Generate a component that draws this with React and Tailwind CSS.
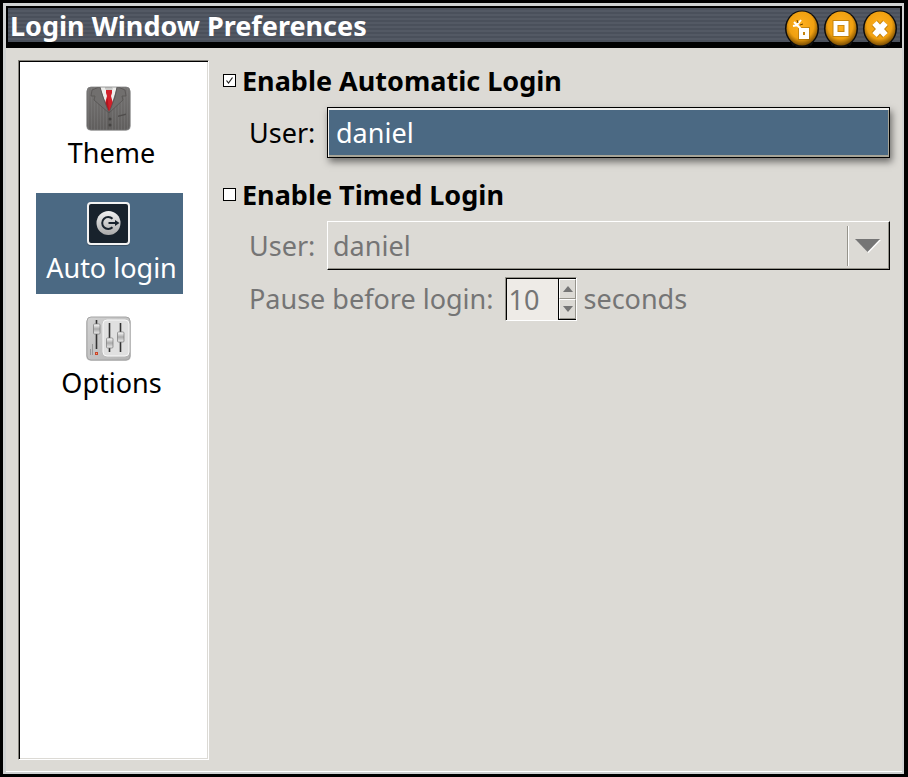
import { useState } from "react";

function ThemeIcon() {
  return (
    <svg width="48" height="48" viewBox="1 -1 48 48" aria-hidden="true">
      <defs>
        <linearGradient id="suit" x1="0" y1="0" x2="0" y2="1">
          <stop offset="0" stopColor="#777574" />
          <stop offset="1" stopColor="#605e5d" />
        </linearGradient>
        <pattern id="pin" width="3" height="4" patternUnits="userSpaceOnUse">
          <rect width="1" height="4" fill="#8a8887" opacity="0.3" />
        </pattern>
        <clipPath id="suitClip">
          <rect x="2" y="2" width="43" height="43" rx="4" />
        </clipPath>
      </defs>
      <rect x="1" y="3" width="45" height="43" rx="5" fill="#000" opacity="0.2" />
      <g clipPath="url(#suitClip)">
        <rect x="2" y="2" width="43" height="43" fill="url(#suit)" />
        <rect x="2" y="2" width="43" height="43" fill="url(#pin)" />
        <path d="M15 2H32L24 28Z" fill="#eeeeec" />
        <path d="M20 2h7l1 2-4 3-4-3z" fill="#c9c9c7" />
        <path d="M21 5h6l0 3-1 3 2.500 9-4.500 7-4.500-7 2.500-9-1-3z" fill="#d2202a" />
        <path d="M22.500 12l-2 8 3.500 6z" fill="#b3151f" />
        <path d="M14 2L7 5l-1 6 4 0-1 4 15 13-6-16-3-10zM33 2l7 3 1 6-4 0 1 4-14 13 6-16 2-10z" fill="#716f6e" stroke="#555352" strokeWidth="0.800" />
        <path d="M24 28V45" stroke="#555352" strokeWidth="0.800" />
        <circle cx="25" cy="34" r="1.500" fill="#454342" />
        <circle cx="25" cy="40" r="1.500" fill="#454342" />
        <path d="M33 30.500l8-2v1.500l-8 2z" fill="#504e4d" />
      </g>
      <rect x="2" y="2" width="43" height="43" rx="4" fill="none" stroke="#777" opacity="0.7" />
    </svg>
  );
}

function AutoLoginIcon() {
  return (
    <svg width="48" height="48" viewBox="1 -1 48 48" aria-hidden="true">
      <defs>
        <linearGradient id="disc" x1="0" y1="0" x2="0" y2="1">
          <stop offset="0" stopColor="#f1f1f1" />
          <stop offset="1" stopColor="#aaa" />
        </linearGradient>
      </defs>
      <rect x="2" y="3" width="43" height="43" rx="4" fill="#000" opacity="0.25" />
      <rect x="3" y="3" width="41" height="41" rx="3" fill="#18222c" stroke="#f2f2f2" strokeWidth="2" />
      <circle cx="23.500" cy="23" r="12" fill="url(#disc)" />
      <path d="M27.500 18.800A6 6 0 1 0 27.500 27.200" fill="none" stroke="#18222c" strokeWidth="2" />
      <path d="M23.500 23H31" stroke="#18222c" strokeWidth="2" />
      <path d="M30 20l4.500 3-4.500 3z" fill="#18222c" />
    </svg>
  );
}

function OptionsIcon() {
  return (
    <svg width="48" height="48" viewBox="1 -1 48 48" aria-hidden="true">
      <defs>
        <linearGradient id="metal" x1="0" y1="0" x2="1" y2="1">
          <stop offset="0" stopColor="#d2d2d2" />
          <stop offset="1" stopColor="#b4b4b4" />
        </linearGradient>
        <linearGradient id="knob" x1="0" y1="0" x2="0" y2="1">
          <stop offset="0" stopColor="#fff" />
          <stop offset="0.5" stopColor="#aaa" />
          <stop offset="1" stopColor="#eee" />
        </linearGradient>
      </defs>
      <rect x="1" y="3" width="45" height="43" rx="5" fill="#000" opacity="0.2" />
      <rect x="2" y="2" width="43" height="43" rx="4" fill="url(#metal)" stroke="#a5a5a5" />
      <rect x="18" y="5" width="26" height="36" rx="4" fill="#e0e0e0" stroke="#f8f8f8" />
      <path d="M11.500 5V34M24.500 8V37M35.500 8V37" stroke="#333" strokeWidth="1.600" />
      <g fill="url(#knob)" stroke="#777" strokeWidth="0.700">
        <rect x="8.500" y="9" width="6.500" height="10" rx="1" />
        <rect x="21.500" y="23" width="6.500" height="10" rx="1" />
        <rect x="32.500" y="17" width="6.500" height="10" rx="1" />
      </g>
      <path d="M7.500 29v11M5.500 34v6" stroke="#999" />
      <rect x="10.500" y="37.500" width="2" height="2" fill="#ffa070" stroke="#c8462a" />
    </svg>
  );
}

function TitleButton({ label, d, weight, children }) {
  return (
    <button type="button" aria-label={label} className="block h-[38px] w-9 shrink-0">
      <svg width="36" height="38" viewBox="0 0 36 38" aria-hidden="true">
        <path d="M6 31l3 5 2-1 1 2h12l1-2 2 1 3-5z" fill="#111" />
        <ellipse cx="18" cy="18.500" rx="17" ry="18" fill="#0c0c0c" />
        <ellipse cx="18" cy="18.500" rx="15.500" ry="17" fill="url(#gold)" />
        <path d={d} fill="none" stroke="#6b4500" strokeOpacity="0.35" strokeWidth={weight + 2} />
        <path d={d} fill="none" stroke="#fff" strokeWidth={weight} />
        {children}
      </svg>
    </button>
  );
}

const sections = [
  { name: "Theme", Icon: ThemeIcon },
  { name: "Auto login", Icon: AutoLoginIcon },
  { name: "Options", Icon: OptionsIcon },
];

function Check({ id, checked, onChange, children }) {
  return (
    <div className="flex h-[42px] items-center gap-1.5">
      <span className="grid pb-0.5">
        <input
          id={id}
          type="checkbox"
          checked={checked}
          onChange={onChange}
          className="peer col-start-1 row-start-1 size-[13px] appearance-none border border-black bg-white"
        />
        <svg
          viewBox="0 0 13 13"
          className="pointer-events-none invisible col-start-1 row-start-1 size-[13px] peer-checked:visible"
          aria-hidden="true"
        >
          <path d="M3.500 6.500L5.500 9 9.500 3.500" fill="none" stroke="#222" strokeWidth="1.200" />
        </svg>
      </span>
      <label htmlFor={id} className="font-bold">
        {children}
      </label>
    </div>
  );
}

export default function App() {
  const [active, setActive] = useState("Auto login");
  const [auto, setAuto] = useState(true);
  const [timed, setTimed] = useState(false);
  const [pause, setPause] = useState(10);

  return (
    <div className="flex min-h-screen flex-col border-3 border-r-4 border-black bg-[#dcdad5] font-['Noto_Sans',sans-serif] text-[27px] leading-9 text-black">
      <svg width="0" height="0" className="absolute" aria-hidden="true">
        <defs>
          <radialGradient id="gold" cx="0.480" cy="0.400" r="0.620">
            <stop offset="0" stopColor="#ffb020" />
            <stop offset="0.650" stopColor="#f0a010" />
            <stop offset="1" stopColor="#6e4400" />
          </radialGradient>
        </defs>
      </svg>
      <div className="flex grow flex-col border-t-3 border-r-2 border-b-2 border-l-3 border-[#d0d2d2] shadow-[inset_0_-1px_0_#fff]">
        <header className="flex h-[42px] items-start justify-between border-2 border-b-[6px] border-black bg-[repeating-linear-gradient(#4a505b_0_2px,#535964_2px_4px)] px-0.5">
          <h1 className="font-bold text-white">Login Window Preferences</h1>
          <div className="flex gap-[3px] pt-0.5">
            <TitleButton label="Minimize" d="M17 20h6v7h-6z" weight={4}>
              <path d="M10 12l8 8M17 10l-4 5M9 16l5-1" fill="none" stroke="#fff" strokeWidth="2" />
              <path d="M13 10l1 3M16 15l3-1" fill="none" stroke="#6b4500" strokeWidth="1" />
            </TitleButton>
            <TitleButton label="Maximize" d="M12.500 13h11v11h-11z" weight={4} />
            <TitleButton label="Close" d="M12.500 13l11 12M23.500 13l-11 12" weight={6} />
          </div>
        </header>
        <div className="flex grow gap-3.5 p-3">
          <nav className="flex w-[191px] shrink-0 flex-col gap-3.5 border border-t-[#85837c] border-r-white border-b-white border-l-[#85837c] bg-white pt-[17px] pr-[25px] pl-[17px] shadow-[inset_1px_1px_0_#000,inset_-1px_-1px_0_#dcdad5]">
            {sections.map(({ name, Icon }) => (
              <button
                key={name}
                type="button"
                onClick={() => setActive(name)}
                className={
                  "flex h-[101px] flex-col items-center gap-[3px] pt-1.5 " +
                  (active === name ? "bg-[#4b6983] text-white" : "")
                }
              >
                <Icon />
                <span className="pl-1">{name}</span>
              </button>
            ))}
          </nav>
          <main className="min-w-0 grow">
            <Check id="auto" checked={auto} onChange={() => setAuto(!auto)}>
              Enable Automatic Login
            </Check>
            <div className="mt-[5px] flex items-center pl-[26px]">
              <label htmlFor="auto-user" className="w-[78px] shrink-0">
                User:
              </label>
              <select
                id="auto-user"
                className="h-[51px] min-w-0 grow appearance-none border border-black bg-[#4b6983] px-2 text-white shadow-[inset_1px_2px_0_#f0efec,inset_-1px_-2px_0_#a6a497,2px_4px_7px_rgba(0,0,0,0.5)]"
              >
                <option>daniel</option>
              </select>
            </div>
            <div className="mt-4">
              <Check id="timed" checked={timed} onChange={() => setTimed(!timed)}>
                Enable Timed Login
              </Check>
            </div>
            <div className="mt-[5px] flex items-center pl-[26px] text-[#757575]">
              <label htmlFor="timed-user" className="w-[78px] shrink-0">
                User:
              </label>
              <div className="grid min-w-0 grow">
                <select
                  id="timed-user"
                  disabled={!timed}
                  className="col-start-1 row-start-1 h-[49px] appearance-none border border-t-white border-r-black border-b-black border-l-white px-[5px] opacity-100 shadow-[inset_-1px_-1px_0_#96948c]"
                >
                  <option>daniel</option>
                </select>
                <div className="pointer-events-none col-start-1 row-start-1 flex items-center gap-[5px] self-center justify-self-end pr-2">
                  <span className="h-10 w-0.5 border-r border-l border-r-white border-l-[#96948c]" />
                  <svg width="28" height="16" viewBox="0 0 28 16" aria-hidden="true">
                    <path d="M2 2h25L14.500 15z" fill="#fff" />
                    <path d="M1 1h25L13.500 14z" fill="#757575" />
                  </svg>
                </div>
              </div>
            </div>
            <div className="mt-[7px] flex items-center pl-[26px] text-[#757575]">
              <label htmlFor="pause" className="mr-3 shrink-0">
                Pause before login:
              </label>
              <div className="flex h-11 w-[72px] border border-t-[#96948c] border-r-white border-b-white border-l-[#96948c] bg-[#eeebe7]">
                <input
                  id="pause"
                  type="text"
                  value={pause}
                  onChange={(e) => setPause(Number(e.target.value) || 0)}
                  disabled={!timed}
                  className="w-[52px] border-t border-l border-black pl-px"
                />
                <div className="flex grow flex-col border border-r-0 border-black bg-[#dcdad5]">
                  <button
                    type="button"
                    aria-label="Increase"
                    disabled={!timed}
                    onClick={() => setPause(pause + 1)}
                    className="flex grow items-center justify-center border border-t-white border-r-[#96948c] border-b-[#96948c] border-l-white"
                  >
                    <svg width="10" height="6" viewBox="0 0 10 6" aria-hidden="true">
                      <path d="M5 0l5 6H0z" fill="#757575" />
                    </svg>
                  </button>
                  <button
                    type="button"
                    aria-label="Decrease"
                    disabled={!timed}
                    onClick={() => setPause(Math.max(0, pause - 1))}
                    className="flex grow items-center justify-center border border-t-white border-r-[#96948c] border-b-[#96948c] border-l-white"
                  >
                    <svg width="10" height="6" viewBox="0 0 10 6" aria-hidden="true">
                      <path d="M5 6l5-6H0z" fill="#757575" />
                    </svg>
                  </button>
                </div>
              </div>
              <span className="ml-1.5">seconds</span>
            </div>
          </main>
        </div>
      </div>
    </div>
  );
}
